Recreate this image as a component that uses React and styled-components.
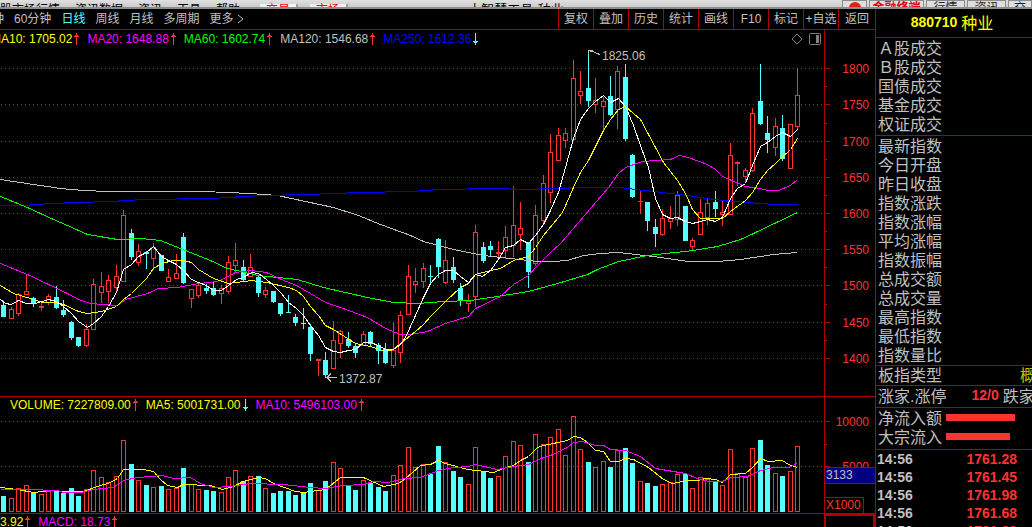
import React from "react";
import styled, { createGlobalStyle, css } from "styled-components";

const RED = "#ff3232";
const LINE = "#b00000";
const CYAN = "#54ffff";
const GREY = "#c0c0c0";
const YELLOW = "#ffff00";
const MAGENTA = "#ff00ff";

const GlobalStyle = createGlobalStyle`
  * {
    box-sizing: border-box;
  }
  body {
    margin: 0;
    background: #000;
    color: ${GREY};
    font-family: "Liberation Sans", "Noto Sans CJK SC", sans-serif;
    font-size: 12px;
  }
`;

const Shell = styled.div`
  height: 100vh;
  overflow: hidden;
  display: flex;
  flex-direction: column;
`;

const TitleBar = styled.header`
  flex: none;
  display: grid;
  grid-template-columns: 1fr auto 1fr;
  align-items: end;
  height: 9px;
  overflow: hidden;
  white-space: nowrap;
  color: #000;
  background: linear-gradient(#e0e0e0, #cccccc);
  border-bottom: 2px solid #8c8c8c;
`;

const Menu = styled.nav`
  display: flex;
  align-items: flex-end;
  gap: 15px;
  line-height: 12px;
`;

const MenuItem = styled.button`
  border: 0;
  padding: 0 0 6px;
  margin: 0;
  background: none;
  font: inherit;
  line-height: 12px;
  color: inherit;
`;

const Tab = styled(MenuItem)`
  width: 38px;
  margin: 0 -8px 0 5px;
  background: #f4f4f4;
  border-right: 2px solid #a0a0a0;
  color: #f00000;
`;

const WindowTitle = styled.div`
  margin-bottom: 6px;
  font-size: 13px;
  line-height: 12px;
`;

const Tools = styled(Menu)`
  justify-content: flex-end;
  gap: 2px;
`;

const Tool = styled.button`
  display: flex;
  align-items: flex-end;
  justify-content: center;
  width: ${props => props.width}px;
  height: 20px;
  margin-bottom: 2px;
  padding: 0 0 5px;
  border: 1px solid #8c8c8c;
  background: #dedede;
  font: inherit;
  font-weight: ${props => (props.hot ? 700 : 400)};
  line-height: 12px;
  color: ${props => (props.hot ? "#e00010" : "#222")};
  overflow: hidden;
`;

const Body = styled.div`
  flex: 1;
  min-height: 0;
  display: grid;
  grid-template-columns: minmax(0, 1fr) 157px;
`;

const Left = styled.main`
  min-width: 0;
`;

const Toolbar = styled.div`
  display: flex;
  justify-content: space-between;
  height: 21px;
  border-bottom: 1px solid ${LINE};
  overflow: hidden;
  white-space: nowrap;
`;

const Periods = styled.nav`
  display: flex;
  align-items: center;
  gap: 10px;
  margin-left: -8px;
`;

const Period = styled.button`
  display: flex;
  align-items: center;
  gap: 4px;
  padding: 0;
  border: 0;
  background: none;
  font: inherit;
  line-height: 20px;
  color: ${props => (props.active ? CYAN : GREY)};
`;

const Actions = styled.div`
  display: flex;
`;

const Action = styled.button`
  width: 35px;
  padding: 0;
  border: 0;
  border-left: 1px solid ${LINE};
  background: none;
  font: inherit;
  line-height: 20px;
  color: ${GREY};

  &:last-child {
    width: 37px;
  }
`;

const Pane = styled.section`
  display: grid;
  grid-template-columns: minmax(0, 1fr) 51px;
  border-bottom: 1px solid ${LINE};
`;

const Axis = styled.div`
  position: relative;
  border-left: 1px solid ${LINE};
  ${props =>
    props.boxed &&
    css`
      border: 2px solid ${LINE};
    `}
`;

const Svg = styled.svg`
  display: block;
  width: 100%;
  height: ${props => props.h}px;
`;

const Legend = styled.div`
  display: flex;
  align-items: center;
  gap: 8px;
  height: ${props => props.h}px;
  padding-left: ${props => props.indent || 0}px;
  padding-bottom: 2px;
  margin-left: ${props => (props.cut ? -9 : 0)}px;
  white-space: nowrap;
`;

const LegendItem = styled.span`
  display: flex;
  align-items: center;
  gap: 2px;
  color: ${props => props.color};
`;

const LegendTools = styled.span`
  display: flex;
  gap: 6px;
  margin-left: auto;
  padding-right: 3px;
`;

const IconButton = styled.button`
  display: flex;
  padding: 0;
  border: 0;
  background: none;
`;

const Cursor = styled.div`
  position: absolute;
  top: 70px;
  left: 0;
  right: 0;
  height: 17px;
  padding-left: 1px;
  line-height: 15px;
  background: #000080;
  border: solid ${LINE};
  border-width: 1px 0;
`;

const Unit = styled.div`
  position: absolute;
  left: 0;
  bottom: 0;
  height: 16px;
  padding: 0 2px 0 1px;
  line-height: 15px;
  color: ${RED};
  border: solid ${LINE};
  border-width: 1px 1px 0 0;
`;

const Side = styled.aside`
  min-width: 0;
  overflow: hidden;
  border-left: 1px solid ${LINE};
  font-size: 16px;
  white-space: nowrap;
`;

const Heading = styled.h1`
  display: flex;
  align-items: center;
  justify-content: center;
  gap: 4px;
  height: 29px;
  margin: 0;
  padding: 0 4px 3px 0;
  border-bottom: 1px solid ${LINE};
  font-size: 16px;
  font-weight: 400;
  color: ${YELLOW};
`;

const Code = styled.span`
  font-size: 14px;
  font-weight: 700;
  color: ${props => props.color || "inherit"};
`;

const Block = styled.div`
  padding: ${props => props.pad || "0"};
  border-bottom: 1px solid ${LINE};
`;

const Row = styled.div`
  display: flex;
  align-items: center;
  height: ${props => (props.tall ? 21 : 19)}px;
  padding: 0 0 3px 2px;
`;

const Kind = styled.span`
  margin-left: 78px;
  color: #c0c000;
`;

const Count = styled(Code)`
  margin: 0 4px 0 25px;
`;

const FlowBar = styled.div`
  height: 7px;
  margin-left: 4px;
  background: ${RED};
`;

const Trades = styled.table`
  width: 141px;
  border-collapse: collapse;
  font-size: 14px;
  font-weight: 700;

  td {
    height: 18px;
    padding: 0 0 0 1px;
    line-height: 18px;
  }
  td:last-child {
    text-align: right;
    color: ${RED};
  }
`;

// [high, body top, body bottom, low, rising, volume top]
const bars = [
  [302, 305, 317, 317, 0, 496], [307, 309, 319, 319, 1, 498], [293, 294, 314, 316, 1, 488],
  [275, 291, 295, 295, 1, 485], [297, 298, 304, 307, 0, 493], [302, 306, 308, 311, 1, 494],
  [294, 296, 303, 305, 1, 491], [286, 297, 308, 309, 0, 490], [300, 310, 315, 317, 0, 493],
  [321, 322, 338, 340, 0, 488], [337, 337, 346, 347, 0, 496], [324, 329, 346, 347, 1, 489],
  [279, 284, 330, 330, 1, 470], [272, 286, 293, 303, 1, 477], [275, 280, 292, 303, 1, 482],
  [265, 276, 288, 292, 1, 476], [210, 215, 282, 282, 1, 440], [229, 233, 257, 260, 0, 464],
  [244, 251, 263, 266, 1, 480], [251, 252, 254, 269, 0, 485], [243, 247, 259, 270, 1, 487],
  [255, 255, 271, 271, 0, 486], [269, 277, 282, 282, 1, 489], [254, 273, 279, 279, 1, 488],
  [233, 237, 283, 284, 0, 468], [289, 289, 299, 308, 1, 484], [282, 285, 296, 298, 1, 489],
  [284, 288, 291, 294, 0, 490], [282, 288, 295, 296, 0, 491], [285, 288, 294, 304, 1, 492],
  [256, 262, 292, 294, 1, 477], [243, 260, 266, 272, 1, 470], [260, 267, 280, 281, 0, 481],
  [254, 267, 277, 277, 1, 476], [276, 277, 293, 297, 0, 476], [287, 290, 295, 298, 1, 488],
  [291, 291, 302, 303, 0, 493], [303, 303, 314, 316, 0, 491], [295, 312, 313, 313, 0, 491],
  [314, 317, 323, 326, 0, 495], [308, 323, 324, 329, 0, 493], [324, 327, 354, 361, 0, 483],
  [359, 359, 361, 376, 1, 490], [352, 360, 375, 378, 0, 481], [321, 340, 369, 369, 1, 462],
  [330, 331, 344, 358, 1, 468], [332, 339, 346, 348, 0, 486], [344, 346, 353, 358, 0, 490],
  [331, 334, 346, 346, 1, 480], [331, 332, 344, 346, 0, 483], [343, 345, 351, 364, 0, 487],
  [343, 349, 363, 364, 0, 491], [322, 350, 366, 368, 1, 475], [311, 315, 353, 363, 1, 465],
  [265, 276, 315, 315, 1, 447], [268, 281, 285, 293, 1, 467], [263, 268, 282, 288, 1, 464],
  [265, 276, 277, 284, 0, 474], [238, 239, 267, 278, 0, 446], [240, 260, 283, 284, 1, 462],
  [257, 267, 280, 283, 0, 471], [283, 288, 300, 306, 0, 477], [294, 301, 304, 312, 1, 484],
  [225, 232, 297, 307, 1, 447], [242, 247, 261, 263, 0, 472], [241, 246, 250, 257, 0, 478],
  [241, 252, 254, 258, 1, 476], [226, 237, 251, 259, 1, 456], [186, 225, 246, 257, 1, 441],
  [202, 228, 235, 250, 1, 445], [242, 242, 272, 288, 0, 462], [205, 215, 264, 266, 1, 434],
  [175, 183, 221, 223, 1, 444], [134, 152, 193, 203, 1, 437], [128, 135, 161, 161, 1, 429],
  [128, 133, 141, 148, 1, 455], [60, 78, 140, 141, 1, 416], [71, 91, 96, 104, 1, 449],
  [50, 88, 101, 107, 0, 462], [78, 100, 105, 113, 1, 467], [97, 101, 107, 130, 1, 461],
  [76, 96, 115, 116, 0, 467], [66, 71, 110, 129, 1, 450], [64, 77, 139, 141, 0, 448],
  [154, 155, 197, 198, 0, 463], [191, 201, 202, 214, 1, 481], [202, 202, 221, 231, 0, 483],
  [219, 227, 234, 247, 0, 486], [209, 218, 235, 236, 1, 484], [206, 218, 222, 229, 1, 482],
  [191, 195, 220, 226, 1, 474], [206, 206, 241, 241, 0, 474], [238, 240, 247, 250, 1, 488],
  [199, 212, 235, 235, 1, 477], [198, 203, 218, 225, 1, 479], [191, 202, 209, 217, 0, 482],
  [201, 212, 215, 226, 1, 485], [143, 155, 215, 215, 1, 449], [161, 162, 164, 186, 1, 473],
  [168, 170, 177, 183, 1, 477], [108, 113, 171, 172, 1, 448], [64, 101, 124, 125, 0, 440],
  [116, 133, 140, 153, 0, 465], [118, 126, 148, 156, 1, 473], [115, 128, 159, 161, 0, 476],
  [124, 124, 169, 169, 1, 471], [68, 95, 127, 129, 1, 446]
];

const averages = [
  {
    color: GREY,
    points:
      "0,179 13,181 40,185 60,188 83,190 108,191 203,191 250,193 277,195 305,201 333,207 358,215 380,224 410,235 423,241 453,249 483,255 528,260 537,261 553,261 567,260 583,255 600,253 618,252 653,256 688,261 717,261 740,259 773,254 797,252"
  },
  {
    color: "#0000ff",
    points:
      "0,205 23,205 50,203 78,202 110,201 143,199 210,198 262,195 307,194 360,192 410,191 440,189 493,188 525,189 583,187 618,187 653,191 687,195 713,199 747,202 773,204 797,204"
  },
  {
    color: "#00ff00",
    points:
      "0,196 27,207 53,219 67,225 87,234 117,239 140,238 160,240 180,248 210,260 227,268 258,275 297,279 323,287 367,297 393,302 417,303 443,301 470,300 490,297 528,291 557,283 587,274 597,269 618,261 647,255 693,250 717,246 740,239 753,233 797,212"
  },
  {
    color: MAGENTA,
    points:
      "0,263 27,274 48,284 67,293 78,299 90,303 117,305 125,299 147,293 158,288 177,287 198,283 210,282 220,280 235,272 251,270 266,272 281,279 296,285 310,293 325,302 340,307 367,317 385,328 400,334 410,334 427,331 445,323 468,316 475,308 500,296 513,284 528,275 535,267 550,252 560,243 590,208 608,187 618,173 625,167 642,161 670,159 679,155 688,157 707,164 715,169 722,176 745,186 760,188 767,190 778,190 790,185 797,179"
  },
  {
    color: YELLOW,
    points:
      "0,285 13,293 30,298 42,302 55,302 63,304 78,311 87,313 101,311 116,306 123,299 131,293 146,278 153,268 161,263 173,260 183,260 191,262 198,269 213,278 228,283 251,280 266,282 288,287 296,290 303,296 310,306 318,315 325,325 333,329 355,343 370,346 385,351 393,349 400,343 415,331 423,324 430,316 445,301 460,287 468,283 475,274 490,270 500,268 513,260 528,256 535,247 543,235 553,223 562,212 573,187 580,172 588,160 603,130 610,119 618,109 625,106 633,113 640,119 655,147 663,162 677,180 685,193 692,209 700,218 722,218 730,211 745,200 752,192 760,179 767,170 775,163 790,149 797,138"
  },
  {
    color: "#ffffff",
    points:
      "0,299 5,303 11,304 18,300 26,303 35,303 48,299 56,301 63,306 71,313 78,321 87,327 93,323 101,316 108,306 116,292 123,269 131,264 138,256 146,252 153,246 161,256 168,260 176,264 183,270 191,279 198,282 206,285 213,290 221,290 228,285 236,279 243,277 251,272 258,273 266,279 273,285 281,293 288,302 296,308 303,315 310,325 318,335 325,347 333,351 340,352 348,350 355,349 363,342 370,342 378,345 385,349 393,349 400,344 405,337 415,315 423,297 430,283 438,274 445,270 453,270 460,276 468,282 475,274 482,276 490,270 498,259 505,247 513,245 520,239 528,243 535,235 543,224 550,210 558,192 565,167 573,138 580,119 588,108 595,101 603,95 610,102 618,98 625,106 633,125 640,145 648,167 655,198 662,214 670,218 677,217 685,221 692,223 700,221 707,219 715,221 722,217 730,198 737,188 745,183 752,165 760,146 767,142 775,136 782,132 790,136 797,129"
  }
];

const volumeAverages = [
  {
    color: YELLOW,
    points:
      "0,487 17,489 33,492 50,490 63,491 83,491 97,486 110,482 117,478 123,469 143,469 153,471 160,479 167,485 177,487 183,484 210,485 222,489 233,486 243,481 258,477 265,478 273,483 295,491 303,492 325,489 340,477 363,477 383,486 398,483 405,478 412,472 420,465 430,464 438,460 445,463 467,469 493,472 503,468 513,465 520,460 528,456 537,447 543,445 567,440 573,436 580,437 587,442 595,450 603,451 610,461 618,461 625,458 633,459 648,467 663,479 672,483 687,480 697,480 705,478 715,479 722,482 730,474 745,473 752,467 760,458 768,461 782,460 788,464 797,467"
  },
  {
    color: MAGENTA,
    points:
      "0,489 27,489 57,490 63,492 80,492 93,489 113,487 123,480 137,477 162,475 173,478 190,477 200,483 213,487 230,486 250,483 283,484 310,487 325,488 343,485 363,484 373,481 388,482 403,478 420,477 438,470 453,467 468,466 475,464 497,469 513,466 528,464 543,457 550,455 567,447 573,442 582,441 595,445 603,445 610,449 625,450 640,456 655,468 685,473 697,478 708,481 722,481 730,477 747,476 760,470 773,467 788,467 797,463"
  }
];

const priceTicks = [
  [68, 1800], [104, 1750], [141, 1700], [177, 1650], [213, 1600],
  [249, 1550], [285, 1500], [322, 1450], [358, 1400]
];
const priceMinor = [86, 123, 159, 195, 231, 267, 304, 340];
const volumeTicks = [[421, 10000], [466, 5000]];

const barX = i => Math.floor(3.8 + 7.49 * i);

const Arrow = ({ down }) => (
  <svg width="5" height="12" viewBox="0 0 5 12" shapeRendering="crispEdges">
    <path
      d={down ? "M2 0h1v8h2v1h-1v1h-1v2h-1v-2h-1v-1h-1v-1h2z" : "M2 0h1v2h1v1h1v1h-2v8h-1v-8h-2v-1h1v-1h1z"}
      fill={down ? CYAN : RED}
    />
  </svg>
);

const Candle = ({ x, bar }) => {
  const [high, top, bottom, low, up] = bar;
  const color = up ? RED : CYAN;
  const hollow = up && bottom - top > 2;
  return (
    <g fill={color}>
      <rect x={x} y={high} width="1" height={Math.max(top - high, 0)} />
      <rect x={x} y={bottom} width="1" height={Math.max(low - bottom, 0)} />
      {hollow ? (
        <rect x={x - 1.5} y={top + 0.5} width="4" height={bottom - top - 1} fill="none" stroke={color} />
      ) : (
        <rect x={x - 2} y={top} width="5" height={bottom - top} />
      )}
    </g>
  );
};

const dots = Array.from({ length: 206 }, () => "h1v1h-1zm4 0").join("");

const Grid = ({ ticks }) => ticks.map(([y]) => <path key={y} d={`M1 ${y}${dots}`} fill="#d00000" />);

const Lines = ({ items }) =>
  items.map(item => (
    <polyline
      key={item.color}
      points={item.points}
      transform="translate(0.5 0.5)"
      fill="none"
      stroke={item.color}
    />
  ));

const Scale = ({ ticks, minor, top, h }) => (
  <Svg h={h} viewBox={`0 ${top} 50 ${h}`}>
    <g fill={LINE}>
      {ticks.map(([y]) => (
        <rect key={y} x="0" y={y} width="5" height="1" />
      ))}
      {minor.map(y => (
        <rect key={y} x="0" y={y} width="2" height="1" />
      ))}
    </g>
    <g fill={RED} fontSize="12" textAnchor="end">
      {ticks.map(([y, label]) => (
        <text key={y} x="44" y={y + 5}>
          {label}
        </text>
      ))}
    </g>
  </Svg>
);

const PriceChart = () => (
  <Svg h={347} viewBox="0 49 824 347" preserveAspectRatio="none">
    <g shapeRendering="crispEdges">
      <Grid ticks={priceTicks} />
      {bars.map((bar, i) => (
        <Candle key={i} x={barX(i)} bar={bar} />
      ))}
      <Lines items={averages} />
      <path
        d="M588.5 54v-4h4M589.5 51.5l4 0l3 2l4 1M326 377.5h11M331 373.5l-4 4l4 4"
        fill="none"
        stroke={GREY}
      />
    </g>
    <g fill={GREY} fontSize="12">
      <text x="602" y="60">
        1825.06
      </text>
      <text x="339" y="383">
        1372.87
      </text>
    </g>
  </Svg>
);

const VolumeChart = () => (
  <Svg h={99} viewBox="0 414 824 99" preserveAspectRatio="none">
    <g shapeRendering="crispEdges">
      <Grid ticks={volumeTicks} />
      {bars.map((bar, i) =>
        bar[4] ? (
          <rect key={i} x={barX(i) - 1.5} y={bar[5] + 0.5} width="4" height={511 - bar[5]} fill="none" stroke={RED} />
        ) : (
          <rect key={i} x={barX(i) - 2} y={bar[5]} width="5" height={512 - bar[5]} fill={CYAN} />
        )
      )}
      <Lines items={volumeAverages} />
    </g>
  </Svg>
);

const Quote = ({ color, down, children }) => (
  <LegendItem color={color}>
    {children}
    <Arrow down={down} />
  </LegendItem>
);

const turnover = ["Ａ股成交", "Ｂ股成交", "国债成交", "基金成交", "权证成交"];
const indexRows = [
  "最新指数", "今日开盘", "昨日收盘", "指数涨跌", "指数涨幅", "平均涨幅",
  "指数振幅", "总成交额", "总成交量", "最高指数", "最低指数", "指数量比"
];
const flows = [["净流入额", 69], ["大宗流入", 64]];
const trades = ["1761.28", "1761.45", "1761.98", "1761.68", "1761.33"];
const actions = ["复权", "叠加", "历史", "统计", "画线", "F10", "标记", "+自选", "返回"];

const App = () => (
  <Shell>
    <GlobalStyle />
    <TitleBar>
      <Menu>
        <MenuItem>股市场行情</MenuItem>
        <MenuItem>资讯数据</MenuItem>
        <MenuItem>资讯</MenuItem>
        <MenuItem>工具</MenuItem>
        <MenuItem>帮助</MenuItem>
        <Tab>交易</Tab>
        <Tab>市场</Tab>
      </Menu>
      <WindowTitle>大智慧工具-种业</WindowTitle>
      <Tools>
        <Tool width={25} aria-label="刷新">
          <svg width="12" height="12" viewBox="0 0 12 12">
            <circle cx="6" cy="6" r="6" fill="#e02010" />
            <path d="M4 8l2 3l3-4" stroke="#fff" fill="none" />
          </svg>
        </Tool>
        <Tool width={55} hot>
          金融终端
        </Tool>
        <Tool width={39}>行情</Tool>
        <Tool width={39}>资讯</Tool>
        <Tool width={24}>交</Tool>
      </Tools>
    </TitleBar>
    <Body>
      <Left>
        <Toolbar>
          <Periods>
            <Period>钟</Period>
            <Period>60分钟</Period>
            <Period active>日线</Period>
            <Period>周线</Period>
            <Period>月线</Period>
            <Period>多周期</Period>
            <Period>
              更多
              <svg width="7" height="10" viewBox="0 0 7 10">
                <path d="M1 1l5 4l-5 4" fill="none" stroke={GREY} />
              </svg>
            </Period>
          </Periods>
          <Actions>
            {actions.map(name => (
              <Action key={name}>{name}</Action>
            ))}
          </Actions>
        </Toolbar>
        <Pane>
          <div>
            <Legend h={19} cut>
              <Quote color={YELLOW}>MA10: 1705.02</Quote>
              <Quote color={MAGENTA}>MA20: 1648.88</Quote>
              <Quote color="#00ff00">MA60: 1602.74</Quote>
              <Quote color={GREY}>MA120: 1546.68</Quote>
              <Quote color="#0000ff" down>
                MA250: 1612.36
              </Quote>
              <LegendTools>
                <IconButton aria-label="标注">
                  <svg width="12" height="12" viewBox="0 0 12 12">
                    <path d="M6 1l5 5l-5 5l-5-5z" fill="none" stroke="#808080" />
                  </svg>
                </IconButton>
                <IconButton aria-label="侧栏">
                  <svg width="12" height="12" viewBox="0 0 12 12">
                    <rect x="0.5" y="0.5" width="11" height="11" rx="1" fill="none" stroke="#808080" />
                    <rect x="7" y="2" width="3" height="8" fill="#808080" />
                  </svg>
                </IconButton>
              </LegendTools>
            </Legend>
            <PriceChart />
          </div>
          <Axis>
            <Scale ticks={priceTicks} minor={priceMinor} top={30} h={366} />
          </Axis>
        </Pane>
        <Pane>
          <div>
            <Legend h={17} indent={10}>
              <Quote color={YELLOW}>VOLUME: 7227809.00</Quote>
              <Quote color={YELLOW} down>
                MA5: 5001731.00
              </Quote>
              <Quote color={MAGENTA}>MA10: 5496103.00</Quote>
            </Legend>
            <VolumeChart />
          </div>
          <Axis>
            <Scale ticks={volumeTicks} minor={[444]} top={397} h={116} />
            <Cursor>3133</Cursor>
            <Unit>X1000</Unit>
          </Axis>
        </Pane>
        <Pane>
          <Legend h={17}>
            <Quote color={YELLOW}>3.92</Quote>
            <Quote color={MAGENTA}>MACD: 18.73</Quote>
          </Legend>
          <Axis boxed />
        </Pane>
      </Left>
      <Side>
        <Heading>
          <Code>880710</Code>种业
        </Heading>
        <Block pad="1px 0">
          {turnover.map(name => (
            <Row key={name}>{name}</Row>
          ))}
        </Block>
        <Block pad="1px 0 0">
          {indexRows.map(name => (
            <Row key={name}>{name}</Row>
          ))}
        </Block>
        <Block>
          <Row>
            板指类型<Kind>概念</Kind>
          </Row>
        </Block>
        <Block>
          <Row tall>
            涨家.涨停<Count color={RED}>12/0</Count>跌家
          </Row>
        </Block>
        <Block pad="1px 0 2px">
          {flows.map(([name, width]) => (
            <Row key={name}>
              {name}
              <FlowBar style={{ width }} />
            </Row>
          ))}
        </Block>
        <Trades>
          <tbody>
            {trades.map(price => (
              <tr key={price}>
                <td>14:56</td>
                <td>{price}</td>
              </tr>
            ))}
          </tbody>
        </Trades>
      </Side>
    </Body>
  </Shell>
);

export default App;
